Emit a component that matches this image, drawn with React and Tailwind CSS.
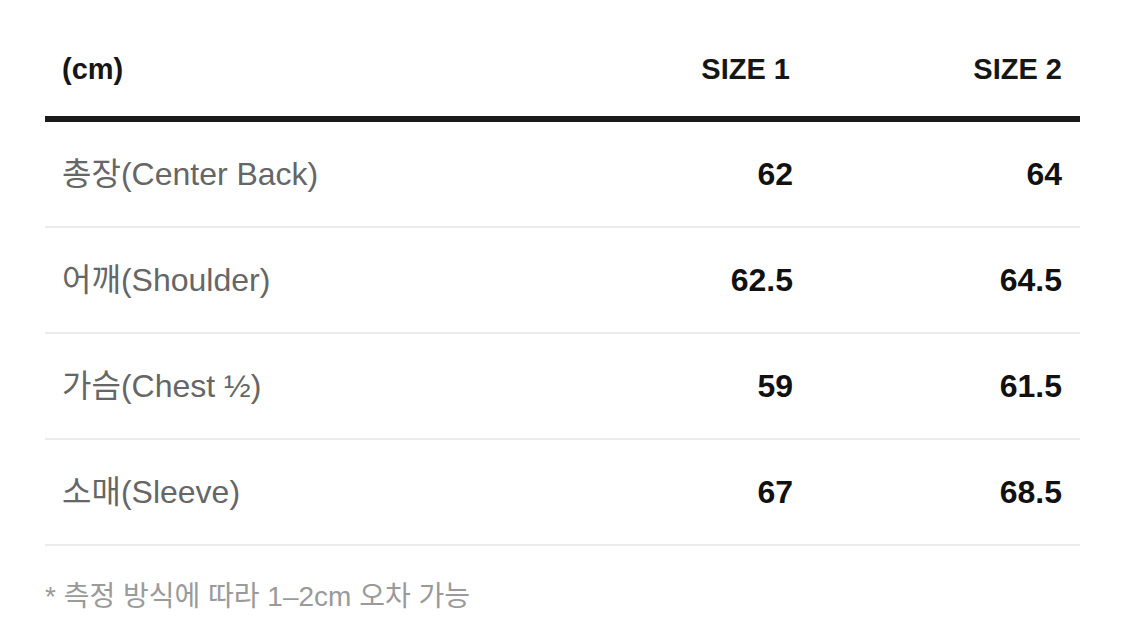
import React from "react";

const rows = [
  ["총장(Center Back)", "62", "64"],
  ["어깨(Shoulder)", "62.5", "64.5"],
  ["가슴(Chest ½)", "59", "61.5"],
  ["소매(Sleeve)", "67", "68.5"],
];

export default function App() {
  return (
    <div
      className="w-[1125px] h-[622px] bg-white px-[45px] pt-[24px] overflow-hidden"
      style={{ fontFamily: '"Liberation Sans", "Noto Sans CJK KR", sans-serif' }}
    >
      <div className="grid grid-cols-[1fr_272px_272px] h-[98px] items-center border-b-[6px] border-[#1a1a1a] text-[29px] font-bold text-[#161616]">
        <div className="pl-[17px]">(cm)</div>
        <div className="text-right pr-[18px]">SIZE 1</div>
        <div className="text-right pr-[18px]">SIZE 2</div>
      </div>
      {rows.map(([label, a, b]) => (
        <div
          key={label}
          className="grid grid-cols-[1fr_272px_272px] h-[106px] items-center border-b-2 border-[#ebebeb]"
        >
          <div className="pl-[17px] text-[32px] text-[#666666]">{label}</div>
          <div className="text-right pr-[15px] text-[32px] font-bold text-[#111111]">{a}</div>
          <div className="text-right pr-[18px] text-[32px] font-bold text-[#111111]">{b}</div>
        </div>
      ))}
      <div className="pt-[33px] text-[28px] leading-[36px] text-[#9a9a9a]">
        * 측정 방식에 따라 1–2cm 오차 가능
      </div>
    </div>
  );
}
